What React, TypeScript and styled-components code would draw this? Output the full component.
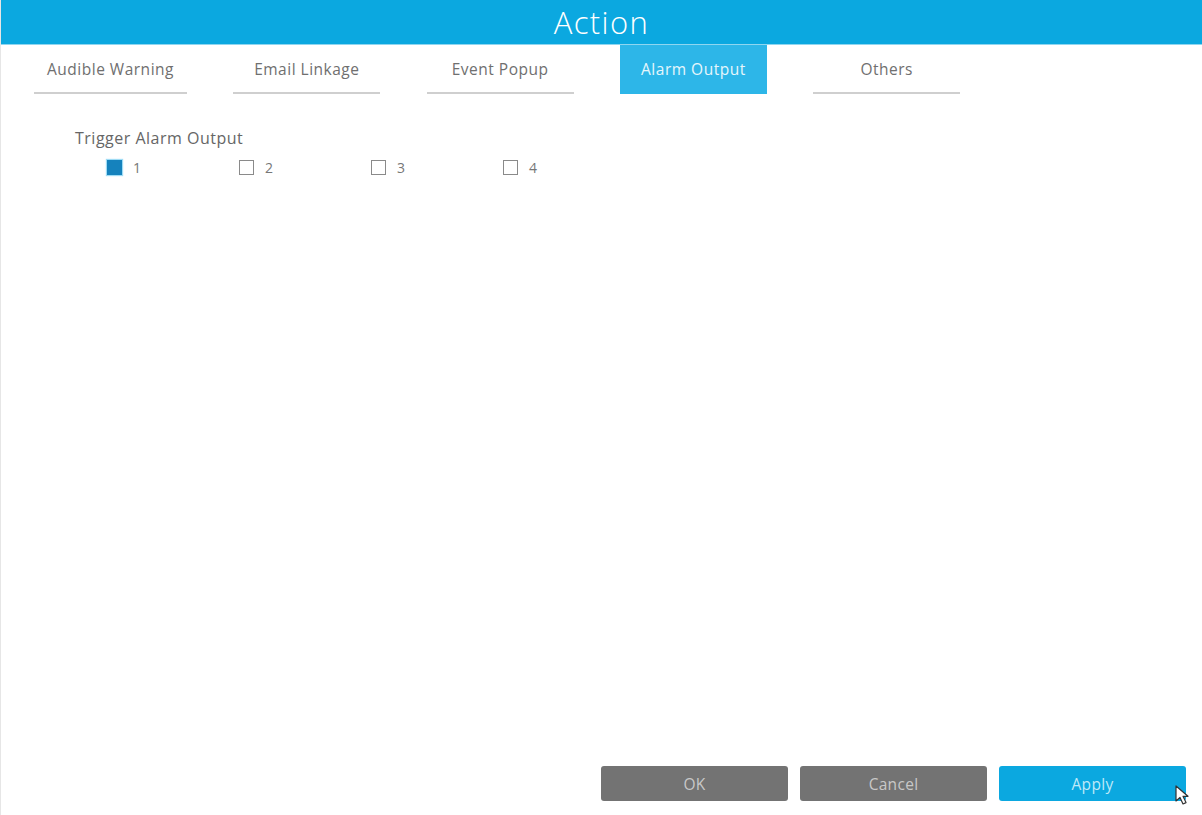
import * as React from 'react';
import styled, { createGlobalStyle } from 'styled-components';

const GlobalStyle = createGlobalStyle`
  html, body {
    margin: 0;
    padding: 0;
    background: #ffffff;
  }
  body {
    font-family: "Open Sans", "Liberation Sans", sans-serif;
  }
`;

const tabs = ['Audible Warning', 'Email Linkage', 'Event Popup', 'Alarm Output', 'Others'];
const outputs = [
  { id: 1, checked: true },
  { id: 2, checked: false },
  { id: 3, checked: false },
  { id: 4, checked: false },
];

const Window = styled.div`
  position: relative;
  width: 1202px;
  height: 815px;
  box-sizing: border-box;
  border-left: 1px solid #e6e6e6;
  display: flex;
  flex-direction: column;
  background: #ffffff;
  overflow: hidden;
`;

const Header = styled.div`
  height: 45px;
  flex-shrink: 0;
  background: #0ba8e0;
  color: #ffffff;
  display: flex;
  align-items: center;
  justify-content: center;
  font-size: 31px;
  font-weight: 300;
  letter-spacing: 1.4px;
  border-bottom: 1px solid #8fd6f0;
  box-sizing: border-box;
`;

const TabBar = styled.div`
  display: flex;
  gap: 46.3px;
  padding-left: 39px;
`;

const Tab = styled.div<{ active?: boolean }>`
  width: 147px;
  height: 49px;
  box-sizing: border-box;
  display: flex;
  align-items: center;
  justify-content: center;
  padding-top: 1px;
  font-size: 15.5px;
  letter-spacing: 0.5px;
  color: ${(p) => (p.active ? '#e6f6fc' : '#6f6f6f')};
  background: ${(p) => (p.active ? '#2db6e8' : 'transparent')};
  border-bottom: 2px solid ${(p) => (p.active ? '#2db6e8' : '#cfcfcf')};

  &:first-child {
    width: 153px;
    margin-left: -6px;
  }
`;

const Content = styled.div`
  padding: 34px 0 0 74px;
  flex: 1;
`;

const GroupLabel = styled.div`
  font-size: 16px;
  letter-spacing: 0.5px;
  color: #666666;
  line-height: 20px;
`;

const CheckRow = styled.div`
  display: flex;
  padding-left: 32px;
  margin-top: 10px;
`;

const CheckItem = styled.label`
  width: 132px;
  display: flex;
  align-items: center;
  gap: 11px;
  font-size: 14px;
  color: #777777;
`;

const Box = styled.span<{ checked?: boolean }>`
  width: 15px;
  height: 15px;
  box-sizing: border-box;
  border: 1px solid ${(p) => (p.checked ? '#1582bd' : '#8a8a8a')};
  background: ${(p) => (p.checked ? '#1582bd' : '#ffffff')};
  box-shadow: ${(p) => (p.checked ? '0 0 1px 1px #9fdcf5' : 'none')};
`;

const Footer = styled.div`
  display: flex;
  justify-content: flex-end;
  gap: 12px;
  padding: 0 16px 14px 0;
`;

const Button = styled.button<{ primary?: boolean }>`
  width: 187px;
  height: 35px;
  border: none;
  border-radius: 3px;
  background: ${(p) => (p.primary ? '#0ba8e0' : '#737373')};
  color: ${(p) => (p.primary ? '#bfe9f8' : '#c8c8c8')};
  font-family: "Open Sans", "Liberation Sans", sans-serif;
  font-size: 15.5px;
  letter-spacing: 0.3px;
  cursor: pointer;
`;

const Cursor = styled.svg`
  position: absolute;
  left: 1174px;
  top: 785px;
`;

export default function App() {
  const [active] = React.useState('Alarm Output');
  return (
    <>
      <GlobalStyle />
      <Window>
        <Header>Action</Header>
        <TabBar>
          {tabs.map((t) => (
            <Tab key={t} active={t === active}>
              {t}
            </Tab>
          ))}
        </TabBar>
        <Content>
          <GroupLabel>Trigger Alarm Output</GroupLabel>
          <CheckRow>
            {outputs.map((o) => (
              <CheckItem key={o.id}>
                <Box checked={o.checked} />
                {o.id}
              </CheckItem>
            ))}
          </CheckRow>
        </Content>
        <Footer>
          <Button>OK</Button>
          <Button>Cancel</Button>
          <Button primary>Apply</Button>
        </Footer>
        <Cursor width="20" height="24" viewBox="0 0 20 24">
          <path
            d="M1 1 L1 16 L5 12.5 L8 19 L11 17.6 L8 11.3 L13 11.3 Z"
            fill="#ffffff"
            stroke="#333333"
            strokeWidth="1.2"
            strokeLinejoin="round"
          />
        </Cursor>
      </Window>
    </>
  );
}
